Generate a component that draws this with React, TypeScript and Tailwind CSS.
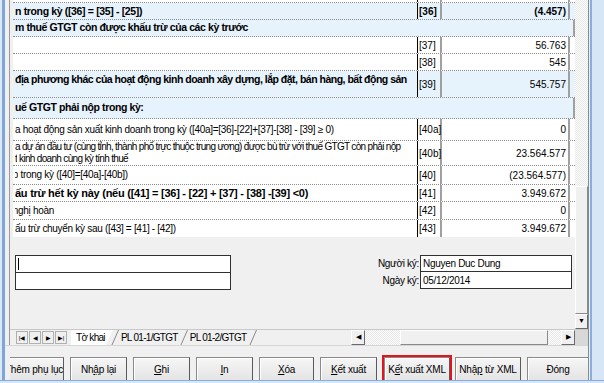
import type { ReactNode } from "react";

type Row = {
  text?: ReactNode;
  code?: string;
  value?: string;
  h: string;
  blue?: boolean;
  bold?: boolean;
  header?: boolean;
  top?: boolean;
  tr?: string;
};

const Cut = ({ text, w }: { text: string; w: string }) => (
  <span className={`inline-flex justify-end overflow-hidden ${w}`}>
    <span className="shrink-0">{text}</span>
  </span>
);

const ROWS: Row[] = [
  { h: "h-[3px]" },
  {
    text: "n trong kỳ ([36] = [35] - [25])",
    code: "[36]",
    value: "(4.457)",
    h: "h-[17px]",
    blue: true,
    bold: true,
  },
  {
    text: "m thuế GTGT còn được khấu trừ của các kỳ trước",
    h: "h-[17px]",
    blue: true,
    bold: true,
    header: true,
  },
  { code: "[37]", value: "56.763", h: "h-[17px]" },
  { code: "[38]", value: "545", h: "h-[17px]" },
  {
    text: " địa phương khác của hoạt động kinh doanh xây dựng, lắp đặt, bán hàng, bất động sản",
    code: "[39]",
    value: "545.757",
    h: "h-[27px]",
    blue: true,
    bold: true,
    top: true,
    tr: "tracking-[-0.5px]",
  },
  {
    text: "uế GTGT phải nộp trong kỳ:",
    h: "h-[21px]",
    blue: true,
    bold: true,
    header: true,
  },
  {
    text: "a hoạt động sản xuất kinh doanh trong kỳ ([40a]=[36]-[22]+[37]-[38] - [39] ≥ 0)",
    code: "[40a]",
    value: "0",
    h: "h-[22px]",
  },
  {
    text: (
      <>
        a dự án đầu tư (cùng tỉnh, thành phố trực thuộc trung ương) được bù trừ với thuế GTGT còn phải nộp
        <br />
        <Cut text="t" w="w-[2px]" /> kinh doanh cùng kỳ tính thuế
      </>
    ),
    code: "[40b]",
    value: "23.564.577",
    h: "h-[25px]",
    tr: "tracking-[-0.68px]",
  },
  {
    text: (
      <>
        <Cut text="p" w="w-[3px]" /> trong kỳ ([40]=[40a]-[40b])
      </>
    ),
    code: "[40]",
    value: "(23.564.577)",
    h: "h-[19px]",
  },
  {
    text: "ấu trừ hết kỳ này (nếu ([41] = [36] - [22] + [37] - [38] -[39] <0)",
    code: "[41]",
    value: "3.949.672",
    h: "h-[17px]",
    bold: true,
  },
  {
    text: (
      <>
        <Cut text="n" w="w-[3px]" />
        ghị hoàn
      </>
    ),
    code: "[42]",
    value: "0",
    h: "h-[18px]",
  },
  {
    text: "ấu trừ chuyển kỳ sau ([43] = [41] - [42])",
    code: "[43]",
    value: "3.949.672",
    h: "h-[17px]",
  },
];

const TableRow = ({ row, last }: { row: Row; last: boolean }) => {
  const bg = row.blue ? "bg-[#e6f2fc]" : "bg-white";
  const line = last ? "" : "border-b border-dotted border-[#8c8c8c]";
  if (row.header) {
    return (
      <div className={`flex items-center ${row.h} ${bg} ${line}`}>
        <span className="flex-1 pl-[2px] text-[10.5px] font-bold tracking-[-0.4px] whitespace-nowrap">
          {row.text}
        </span>
        <span className="h-full w-[2px] bg-[#a0a0a0]" />
      </div>
    );
  }
  const desc = row.blue
    ? `font-bold text-[10.5px] ${row.tr ?? "tracking-[-0.35px]"}`
    : row.bold
      ? "font-bold text-[11px] tracking-[-0.25px]"
      : `text-[10px] ${row.tr ?? "tracking-[-0.3px]"}`;
  const strong = row.code === "[36]" ? "font-bold" : "";
  return (
    <div className={`flex ${row.h} ${bg} ${line}`}>
      <div
        className={`flex w-[405px] shrink-0 overflow-hidden border-r border-black pl-[2px] leading-[12px] whitespace-nowrap ${desc} ${
          row.top ? "items-start pt-[2px]" : "items-center"
        }`}
      >
        <span>{row.text}</span>
      </div>
      <div className={`flex w-[24px] shrink-0 items-center border-r-2 border-[#a0a0a0] pl-[1px] text-[10px] ${strong}`}>
        {row.code}
      </div>
      <div
        className={`flex w-[128px] shrink-0 items-center justify-end border-r-2 border-[#a0a0a0] pr-[2px] text-[10px] ${strong}`}
      >
        {row.value}
      </div>
    </div>
  );
};

const Btn = ({ children, w, cls = "" }: { children: ReactNode; w: string; cls?: string }) => (
  <button
    type="button"
    className={`flex h-[24px] ${w} ${cls} shrink-0 items-center justify-center border border-[#8a8a8a] border-r-[#5a5a5a] border-b-[#5a5a5a] bg-gradient-to-b from-[#f6f6f6] to-[#e4e4e4] text-[10px] tracking-[-0.2px] whitespace-pre text-black shadow-[inset_1px_1px_0_#ffffff]`}
  >
    {children}
  </button>
);

const NavBox = ({ children }: { children: ReactNode }) => (
  <span className="flex h-[13px] w-[12px] items-center justify-center border border-[#b0b0b0] bg-[#f0f0f0] text-[6px] leading-none">
    {children}
  </span>
);

const Slant = () => (
  <svg width="8" height="16" viewBox="0 0 8 16" className="-mx-[2px] shrink-0">
    <line x1="0.5" y1="16" x2="7.5" y2="0" stroke="#8a8a8a" strokeWidth="1" />
  </svg>
);

const checker =
  "[background-image:repeating-conic-gradient(#e9e9e9_0_25%,#fbfbfb_0_50%)] [background-size:2px_2px]";

export default function App() {
  return (
    <div className="flex h-[383px] w-[604px] flex-col overflow-hidden bg-[#f0f0f0] font-['Liberation_Sans',Arial,sans-serif] text-[11px] text-black">
      <div className="flex min-h-0 flex-1">
        <div className="w-[5px] shrink-0 border-l-2 border-[#dde9f6] bg-[#7ea6d8]" />
        <div className="flex min-w-0 flex-1 flex-col">
          <div className="flex h-[345px] shrink-0 pl-[4px]">
            <div className="flex flex-1 flex-col border-l border-[#9a9a9a]">
              <div className="flex min-h-0 flex-1">
                <div className="flex min-w-0 flex-1 flex-col pl-[3px]">
                  <div className="flex flex-col">
                    {ROWS.map((row, i) => (
                      <TableRow key={i} row={row} last={i === ROWS.length - 1} />
                    ))}
                  </div>
                  <div className="mt-[18px] flex text-[10px] tracking-[-0.3px]">
                    <div className="ml-[2px] flex w-[216px] flex-col border border-[#303030] bg-white">
                      <div className="flex h-[17px] items-center border-b border-[#303030] pl-[2px]">
                        <span className="h-[12px] w-px bg-black" />
                      </div>
                      <div className="h-[16px]" />
                    </div>
                    <div className="ml-auto mr-[3px] flex flex-col">
                      <div className="flex h-[17px] items-center">
                        <span className="w-[60px] pr-[1px] text-right">Người ký:</span>
                        <span className="flex h-full w-[152px] items-center border border-[#303030] bg-white pl-[2px]">
                          Nguyen Duc Dung
                        </span>
                      </div>
                      <div className="flex h-[17px] items-center">
                        <span className="w-[60px] pr-[1px] text-right">Ngày ký:</span>
                        <span className="flex h-full w-[152px] items-center border border-t-0 border-[#303030] bg-white pl-[2px]">
                          05/12/2014
                        </span>
                      </div>
                    </div>
                  </div>
                </div>
                <div className={`flex w-[13px] shrink-0 flex-col ${checker}`}>
                  <div className="h-[186px]" />
                  <div className="flex-1 border border-[#fff] border-r-[#8a8a8a] border-b-[#8a8a8a] bg-[#f0f0f0]" />
                  <div className="flex h-[15px] items-center justify-center border border-[#fff] border-r-[#6a6a6a] border-b-[#6a6a6a] bg-[#f0f0f0] text-[7px]">
                    ▼
                  </div>
                </div>
              </div>
              <div className="flex h-[16px] shrink-0 items-center border-t border-[#c8c8c8]">
                <div className="ml-[6px] flex gap-[1px]">
                  <NavBox>|◀</NavBox>
                  <NavBox>◀</NavBox>
                  <NavBox>▶</NavBox>
                  <NavBox>▶|</NavBox>
                </div>
                <div className="ml-[4px] flex h-full items-center text-[10px] tracking-[-0.7px]">
                  <span className="flex h-full items-center bg-white pl-[5px] pr-[8px] [clip-path:polygon(0_0,100%_0,calc(100%-7px)_100%,0_100%)]">
                    Tờ khai
                  </span>
                  <Slant />
                  <span className="px-[4px]">PL 01-1/GTGT</span>
                  <Slant />
                  <span className="px-[4px]">PL 01-2/GTGT</span>
                  <Slant />
                </div>
                <div className="ml-auto flex h-full w-[237px] items-stretch">
                  <span className="flex w-[14px] items-center justify-center border border-[#fff] border-r-[#6a6a6a] border-b-[#6a6a6a] bg-[#f0f0f0] text-[7px]">
                    ◀
                  </span>
                  <span className={`w-[35px] ${checker}`} />
                  <span className="flex-1 border border-[#fff] border-r-[#8a8a8a] border-b-[#8a8a8a] bg-[#f0f0f0]" />
                  <span className={`w-[13px] ${checker}`} />
                  <span className="flex w-[14px] items-center justify-center border border-[#fff] border-r-[#6a6a6a] border-b-[#6a6a6a] bg-[#f0f0f0] text-[7px]">
                    ▶
                  </span>
                  <span className="w-[13px] bg-[#d8d8d8]" />
                </div>
              </div>
            </div>
          </div>
          <div className="flex flex-1 items-start border-t border-[#d6d6d6] pt-[9px] pl-[5px]">
            <div className="flex items-center overflow-hidden pr-[2px]">
              <Btn w="w-[60px]" cls="-ml-[6px]">
                Thêm phụ lục
              </Btn>
              <span className="w-[6px] shrink-0" />
              <Btn w="w-[57px]">
                Nh<u>ậ</u>p lại
              </Btn>
              <span className="w-[6px] shrink-0" />
              <Btn w="w-[57px]">
                <u>G</u>hi
              </Btn>
              <span className="w-[6px] shrink-0" />
              <Btn w="w-[57px]">
                <u>I</u>n
              </Btn>
              <span className="w-[6px] shrink-0" />
              <Btn w="w-[55px]">
                <u>X</u>óa
              </Btn>
              <span className="w-[6px] shrink-0" />
              <Btn w="w-[57px]">
                <u>K</u>ết xuất
              </Btn>
              <span className="w-[5px] shrink-0" />
              <span className="flex shrink-0 border-2 border-[#e3141b]">
                <Btn w="w-[66px]">
                  K<u>ế</u>t xuất XML
                </Btn>
              </span>
              <span className="w-[3px] shrink-0" />
              <Btn w="w-[66px]">
                {"Nhậ"}
                <u>p</u>
                {" từ XML"}
              </Btn>
              <span className="w-[6px] shrink-0" />
              <Btn w="w-[62px]">
                Đón<u>g</u>
              </Btn>
            </div>
          </div>
        </div>
        <div className="flex w-[16px] shrink-0">
          <span className="w-px bg-[#8a8a8a]" />
          <span className="w-px bg-[#f0f0f0]" />
          <span className="w-[2px] bg-[#86aee0]" />
          <span className="flex-1 bg-[#d6e6f7]" />
        </div>
      </div>
      <div className="flex h-[3px] shrink-0 flex-col">
        <span className="h-px bg-[#86aee0]" />
        <span className="flex-1 bg-[#d6e6f7]" />
      </div>
    </div>
  );
}
